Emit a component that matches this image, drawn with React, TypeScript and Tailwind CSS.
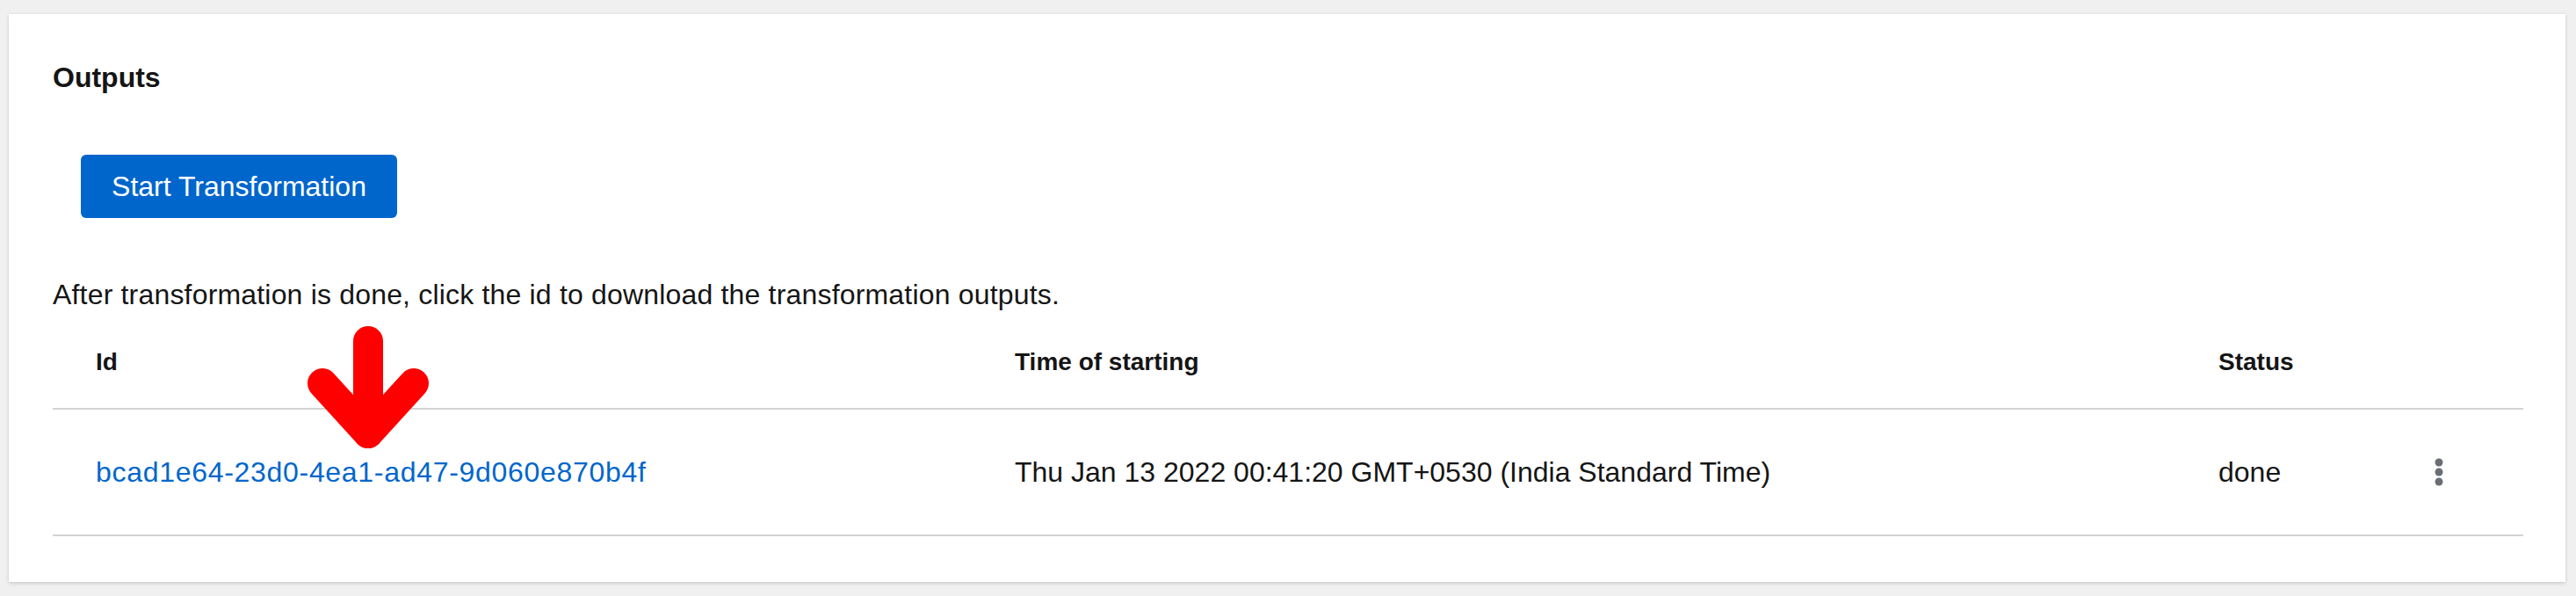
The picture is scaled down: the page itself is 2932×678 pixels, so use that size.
import React from 'react';

const rows = [
  {
    id: 'bcad1e64-23d0-4ea1-ad47-9d060e870b4f',
    started: 'Thu Jan 13 2022 00:41:20 GMT+0530 (India Standard Time)',
    status: 'done',
  },
];

const KebabIcon = () => (
  <svg width="10" height="34" viewBox="0 0 10 34" fill="#6a6e73">
    <circle cx="5" cy="6" r="4.5" />
    <circle cx="5" cy="17" r="4.5" />
    <circle cx="5" cy="28" r="4.5" />
  </svg>
);

const App: React.FC = () => {
  return (
    <div className="min-h-screen bg-[#f0f0f0] pt-[16px] pl-[10px] pr-[12px] pb-[16px] font-['Liberation_Sans',Arial,sans-serif] text-[#151515]">
      <section className="relative h-[646px] bg-white shadow-[0_2px_4px_rgba(3,3,3,0.12),0_0_4px_rgba(3,3,3,0.06)]">
        <div className="pl-[50px] pr-[48px] pt-[52px]">
          <h2 className="text-[32px] leading-[40px] font-bold">Outputs</h2>

          <button className="ml-[32px] mt-[68px] flex h-[72px] w-[360px] items-center justify-center rounded-[6px] bg-[#0066cc] text-[32px] leading-none text-white">
            Start Transformation
          </button>

          <p className="mt-[63px] text-[32px] leading-[48px] tracking-[0.18px]">
            After transformation is done, click the id to download the transformation outputs.
          </p>

          {/* table */}
          <div className="grid h-[107px] grid-cols-[1095px_1370px_155px_192px] items-center border-b-2 border-[#d2d2d2] text-[28px] font-bold">
            <div className="pl-[49px]">Id</div>
            <div>Time of starting</div>
            <div>Status</div>
            <div />
          </div>
          {rows.map(r => (
            <div
              key={r.id}
              className="grid h-[144px] grid-cols-[1095px_1370px_155px_192px] items-center border-b-2 border-[#d2d2d2] text-[32px]"
            >
              <div className="pl-[49px]">
                <a className="tracking-[0.7px] text-[#0066cc]">{r.id}</a>
              </div>
              <div>{r.started}</div>
              <div>{r.status}</div>
              <div className="flex justify-center">
                <KebabIcon />
              </div>
            </div>
          ))}
        </div>

        {/* annotation arrow */}
        <svg
          className="absolute left-[338px] top-[354px]"
          width="142"
          height="142"
          viewBox="0 0 142 142"
          fill="none"
          stroke="#ff0000"
          strokeWidth="34"
          strokeLinecap="round"
          strokeLinejoin="round"
        >
          <path d="M71 18 L71 123" />
          <path d="M19 66 L71 123 L123 66" />
        </svg>
      </section>
    </div>
  );
};

export default App;
